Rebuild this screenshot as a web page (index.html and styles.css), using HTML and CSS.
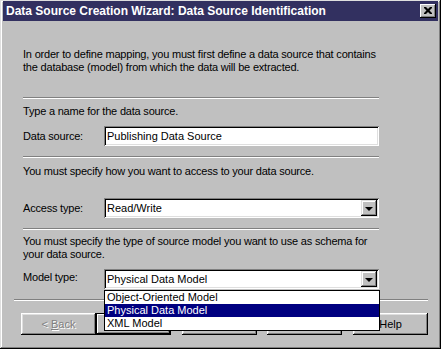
FILE: index.html
```html
<!DOCTYPE html>
<html lang="en">
<head>
    <meta charset="UTF-8">
    <title>Data Source Creation Wizard</title>
    <link rel="stylesheet" href="styles.css">
</head>
<body>
    <div class="window">
        <div class="titlebar">
            <span class="title">Data Source Creation Wizard: Data Source Identification</span>
            <span class="close-btn">
                <svg width="8" height="7" viewBox="0 0 8 7"><path d="M0 0h2l2 2 2-2h2v1L5.5 3.5 8 6v1H6L4 5 2 7H0V6l2.5-2.5L0 1z" fill="#000"/></svg>
            </span>
        </div>

        <div class="page">
            <p class="intro">In order to define mapping, you must first define a data source that contains<br>the database (model) from which the data will be extracted.</p>
            <div class="sep"></div>

            <p class="hint">Type a name for the data source.</p>
            <div class="row row-name">
                <label>Data source:</label>
                <div class="textbox">Publishing Data Source</div>
            </div>
            <div class="sep sep-2"></div>

            <p class="hint">You must specify how you want to access to your data source.</p>
            <div class="row row-access">
                <label>Access type:</label>
                <div class="combo">
                    <span class="combo-text">Read/Write</span>
                    <span class="combo-btn"><i class="arrow"></i></span>
                </div>
            </div>
            <div class="sep sep-3"></div>

            <p class="hint hint-model">You must specify the type of source model you want to use as schema for<br>your data source.</p>
            <div class="row row-model">
                <label>Model type:</label>
                <div class="combo open">
                    <span class="combo-text">Physical Data Model</span>
                    <span class="combo-btn"><i class="arrow"></i></span>
                    <ul class="dropdown">
                        <li>Object-Oriented Model</li>
                        <li class="selected">Physical Data Model</li>
                        <li>XML Model</li>
                    </ul>
                </div>
            </div>
        </div>

        <div class="footer">
            <div class="sep"></div>
            <div class="buttons">
                <button class="btn disabled">&lt; <u>B</u>ack</button>
                <button class="btn default">Next &gt;</button>
                <button class="btn">Finish</button>
                <button class="btn">Cancel</button>
                <button class="btn">Help</button>
            </div>
        </div>
    </div>
</body>
</html>
```

FILE: styles.css
```css
body {
    margin: 0;
    background-color: #c0c0c0;
    font-family: "Liberation Sans", Arial, sans-serif;
    font-size: 11px;
    color: #000;
}
.window {
    width: 441px;
    height: 349px;
    box-sizing: border-box;
    padding: 1px 3px 3px 3px;
    background-color: #c0c0c0;
    box-shadow: inset -1px -1px #000, inset 1px 1px #dfdfdf, inset -2px -2px #808080, inset 2px 2px #fff;
    position: relative;
}
.titlebar {
    height: 20px;
    background-color: #323060;
    display: flex;
    align-items: center;
    justify-content: space-between;
    padding: 0 2px 0 3px;
}
.title {
    color: #fff;
    font-family: "Liberation Sans", Arial, sans-serif;
    font-weight: bold;
    font-size: 12px;
    white-space: nowrap;
}
.close-btn {
    width: 16px;
    height: 14px;
    box-sizing: border-box;
    background-color: #c0c0c0;
    box-shadow: inset -1px -1px #000, inset 1px 1px #fff, inset -2px -2px #808080;
    display: flex;
    align-items: center;
    justify-content: center;
    padding: 0 1px 1px 0;
}
.page {
    padding: 0 59px 0 20px;
    letter-spacing: -0.2px;
}
p {
    margin: 0;
    line-height: 13px;
    white-space: nowrap;
}
.intro {
    margin-top: 27px;
}
.sep {
    height: 0;
    border-top: 1px solid #808080;
    border-bottom: 1px solid #fff;
    margin-top: 23px;
}
.sep-2, .sep-3 {
    margin-top: 10px;
}
.hint {
    margin-top: 6px;
}
.sep-2 + .hint {
    margin-top: 7px;
}
.hint-model {
    margin-top: 5px !important;
}
.row {
    display: flex;
    align-items: center;
}
.row label {
    width: 81px;
    flex-shrink: 0;
}
.row-name {
    margin-top: 8px;
}
.row-access {
    margin-top: 20px;
}
.row-model {
    margin-top: 8px;
    align-items: flex-start;
}
.row-model label {
    padding-top: 2px;
}
.textbox, .combo {
    flex: 1;
    height: 20px;
    box-sizing: border-box;
    background-color: #fff;
    box-shadow: inset 1px 1px #808080, inset -1px -1px #fff, inset 2px 2px #000, inset -2px -2px #dfdfdf;
    padding: 0 3px;
    display: flex;
    align-items: center;
    letter-spacing: 0;
}
.combo {
    position: relative;
    padding-right: 2px;
}
.combo-text {
    flex: 1;
}
.combo-btn {
    width: 16px;
    height: 16px;
    box-sizing: border-box;
    background-color: #c0c0c0;
    box-shadow: inset -1px -1px #000, inset 1px 1px #dfdfdf, inset -2px -2px #808080, inset 2px 2px #fff;
    display: flex;
    align-items: center;
    justify-content: center;
}
.arrow {
    width: 0;
    height: 0;
    border-left: 4px solid transparent;
    border-right: 4px solid transparent;
    border-top: 4px solid #000;
    margin: 1px 1px 0 0;
}
.dropdown {
    position: absolute;
    top: 21px;
    left: 0;
    right: -1px;
    margin: 0;
    padding: 0;
    list-style: none;
    background-color: #fff;
    border: 1px solid #000;
    z-index: 2;
}
.dropdown li {
    height: 13px;
    line-height: 13px;
    padding-left: 2px;
    font-size: 11px;
}
.dropdown li.selected {
    background-color: #000080;
    color: #fff;
}
.footer {
    padding: 0 10px 0 11px;
}
.footer .sep {
    margin-top: 10px;
}
.buttons {
    display: flex;
    margin-top: 12px;
    padding-left: 7px;
}
.btn {
    width: 75px;
    height: 22px;
    box-sizing: border-box;
    border: none;
    padding: 0;
    background-color: #c0c0c0;
    font-family: "Liberation Sans", Arial, sans-serif;
    font-size: 11px;
    color: #000;
    box-shadow: inset -1px -1px #000, inset 1px 1px #fff, inset -2px -2px #808080, inset 2px 2px #dfdfdf;
}
.btn + .btn {
    margin-left: 11px;
}
.btn.default {
    margin-left: 0;
    box-shadow: inset 0 0 0 1px #000, inset -2px -2px #000, inset 2px 2px #fff, inset -3px -3px #808080;
}
.btn:last-child {
    margin-left: 11px;
}
.btn:nth-child(4) {
    margin-left: 10px;
}
.btn.disabled {
    color: #808080;
    text-shadow: 1px 1px #fff;
}
```
